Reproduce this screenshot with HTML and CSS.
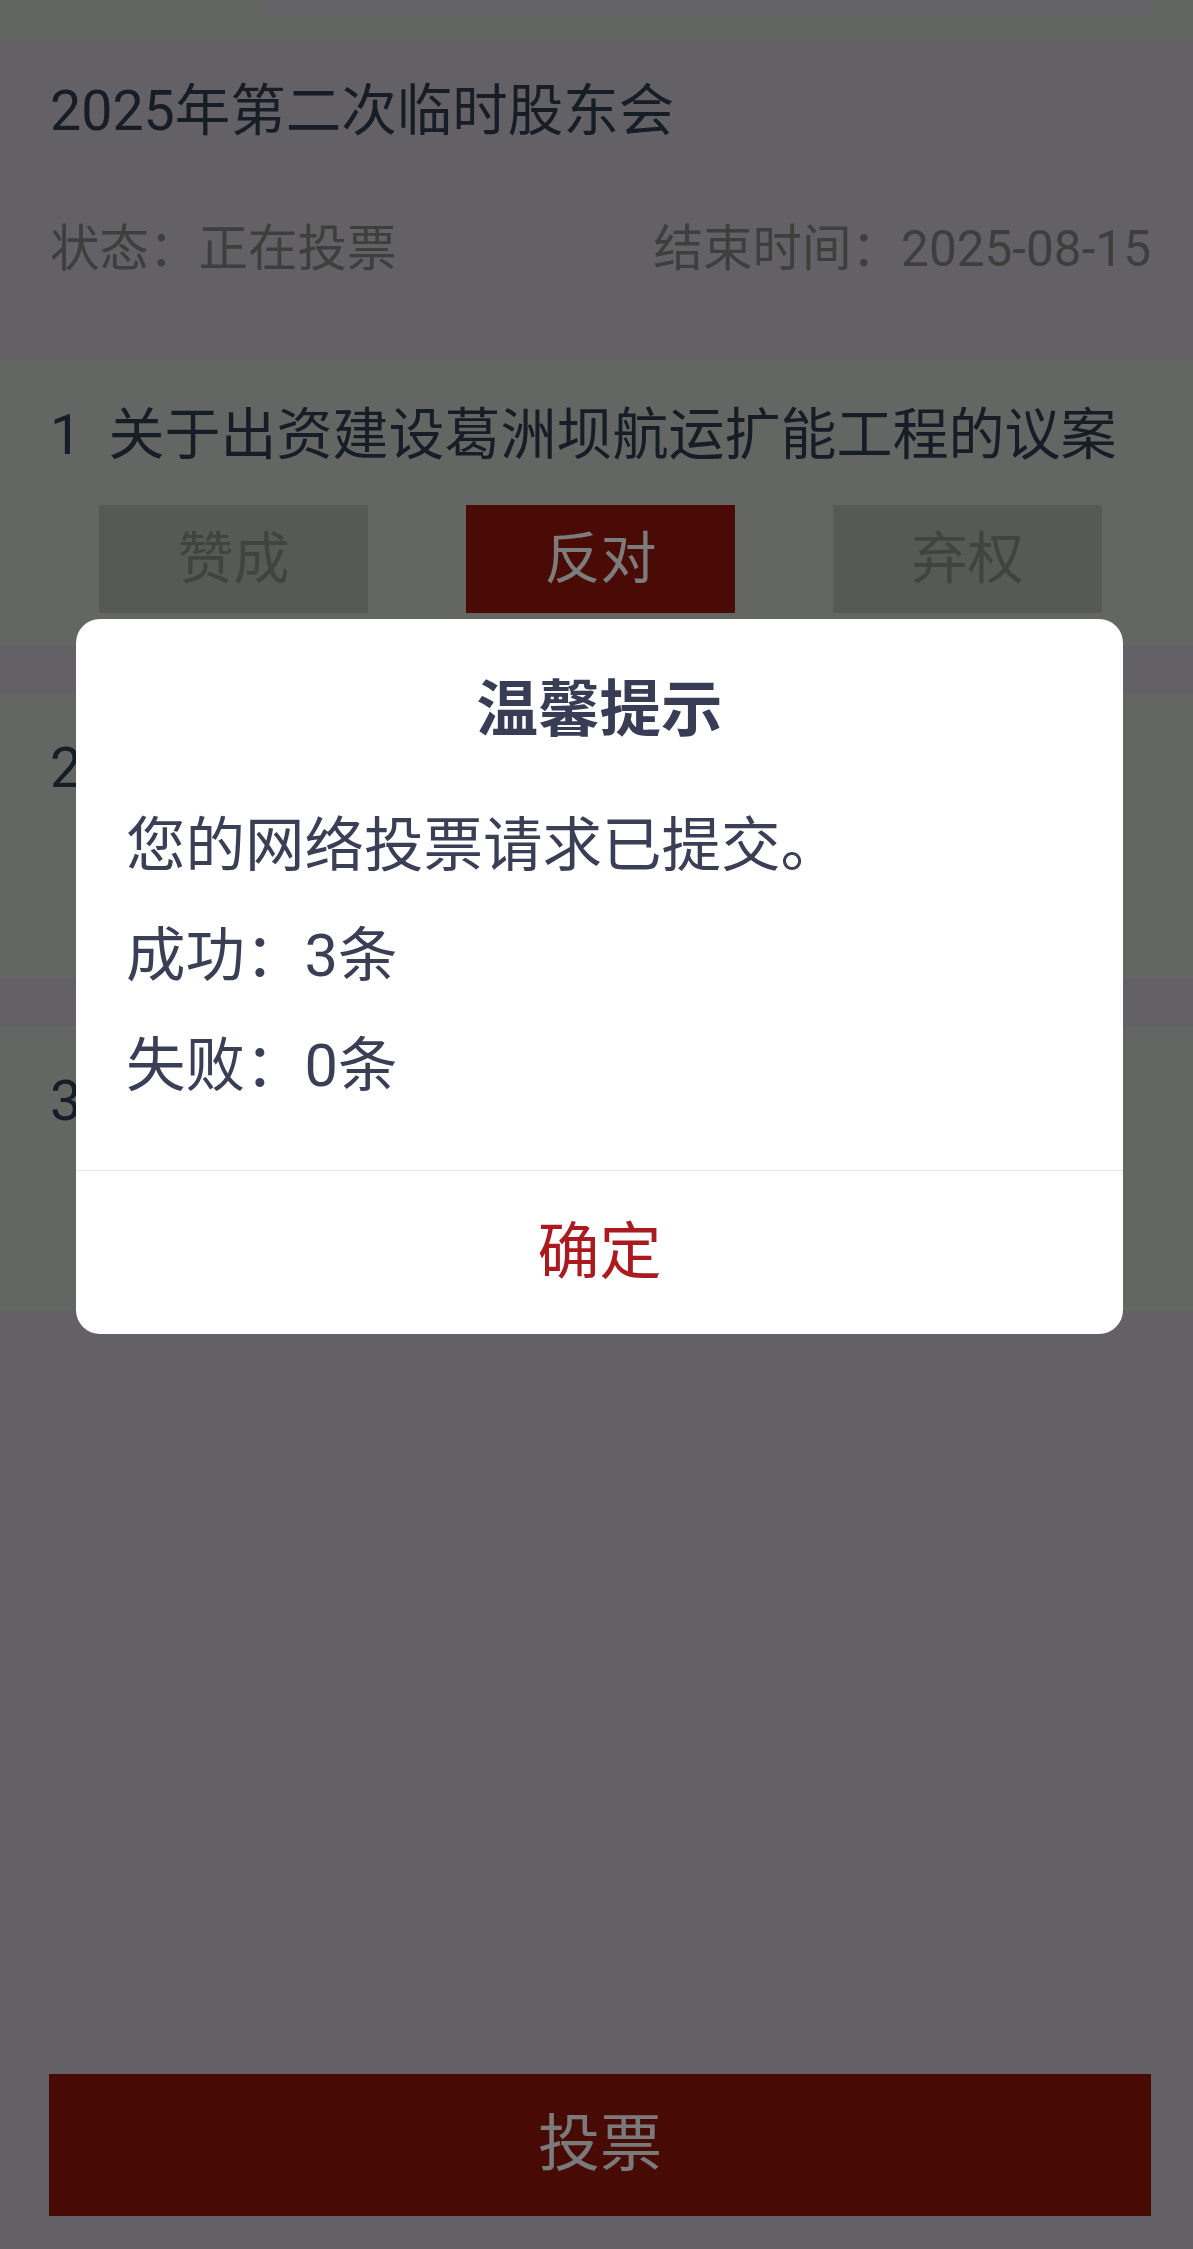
FILE: index.html
```html
<!DOCTYPE html>
<html lang="zh-CN">
  <head>
    <meta charset="UTF-8" />
    <meta name="viewport" content="width=device-width, initial-scale=1.0" />
    <title>网络投票</title>
    <link rel="stylesheet" href="styles.css">
  </head>
  <body>
    <div class="topbar"><div class="tab-line"></div></div>
    <div class="main">
      <div class="meeting">
        <div class="meeting-title">2025年第二次临时股东会</div>
        <div class="meeting-meta">
          <span>状态：正在投票</span>
          <span>结束时间：2025-08-15</span>
        </div>
      </div>
      <div class="motion">
        <div class="motion-title"><span class="motion-no">1</span>关于出资建设葛洲坝航运扩能工程的议案</div>
        <div class="choices">
          <div class="choice">赞成</div>
          <div class="choice on">反对</div>
          <div class="choice">弃权</div>
        </div>
      </div>
      <!-- 被弹窗遮住的议案 -->
      <div class="motion">
        <div class="motion-title"><span class="motion-no">2</span></div>
      </div>
      <div class="motion">
        <div class="motion-title"><span class="motion-no">3</span></div>
      </div>
    </div>
    <div class="footer">
      <div class="vote-btn">投票</div>
    </div>

    <!-- 提交结果弹窗 -->
    <div class="mask">
      <div class="dialog">
        <div class="dialog-title">温馨提示</div>
        <div class="dialog-body">
          <p>您的网络投票请求已提交。</p>
          <p>成功：3条</p>
          <p>失败：0条</p>
        </div>
        <div class="dialog-btn">确定</div>
      </div>
    </div>
  </body>
</html>
```

FILE: styles.css
```css
body {
  margin: 0;
  padding: 0;
  min-height: 100vh;
  display: flex;
  flex-direction: column;
  background: #c6c2ca;
  font-family: Roboto, "Noto Sans CJK SC", sans-serif;
  color: #2c3a4c;
}
.topbar {
  height: 40px;
  background: #c4cac2;
}
.tab-line {
  margin-left: 268px;
  width: 882px;
  height: 13px;
  background: #c8c4cc;
}
.main {
  flex: 1;
}
.meeting {
  padding: 32px 42px 76px 50px;
}
.meeting-title {
  font-size: 55.5px;
  line-height: 80px;
}
.meeting-meta {
  display: flex;
  justify-content: space-between;
  margin-top: 62px;
  font-size: 49.5px;
  line-height: 70px;
  color: #787e76;
}
.motion {
  box-sizing: border-box;
  height: 285px;
  padding: 35px 42px 32px 50px;
  margin-bottom: 48px;
  background: #c6ccc4;
}
.motion-title {
  font-size: 56px;
  line-height: 80px;
  white-space: nowrap;
}
.motion-no {
  margin-right: 27px;
}
.choices {
  display: flex;
  justify-content: space-around;
  margin-top: 30px;
}
.choice {
  width: 269px;
  height: 108px;
  line-height: 108px;
  text-align: center;
  font-size: 56px;
  background: #acb2aa;
  color: #808680;
}
.choice.on {
  background: #94140c;
  color: #f8f8f8;
}
.footer {
  padding: 0 42px 33px 49px;
}
.vote-btn {
  height: 142px;
  line-height: 142px;
  text-align: center;
  font-size: 62px;
  background: #8e1409;
  color: #f4f4f4;
}
/* 遮罩层 */
.mask {
  position: fixed;
  top: 0;
  right: 0;
  bottom: 0;
  left: 0;
  display: flex;
  flex-direction: column;
  align-items: flex-start;
  background: rgba(0, 0, 0, 0.5);
}
.dialog {
  width: 1047px;
  margin: 619px 0 0 76px;
  border-radius: 24px;
  overflow: hidden;
  background: #fff;
  color: #3a3f56;
}
.dialog-title {
  padding-top: 51px;
  line-height: 80px;
  text-align: center;
  font-size: 61.5px;
  font-weight: bold;
  color: #383c54;
}
.dialog-body {
  padding: 41px 50px 49px;
  font-size: 59.5px;
  line-height: 110px;
}
.dialog-body p {
  margin: 0;
}
.dialog-btn {
  height: 163px;
  line-height: 163px;
  border-top: 1px solid #e6e6e6;
  text-align: center;
  font-size: 62px;
  color: #ab1a1f;
}
```
